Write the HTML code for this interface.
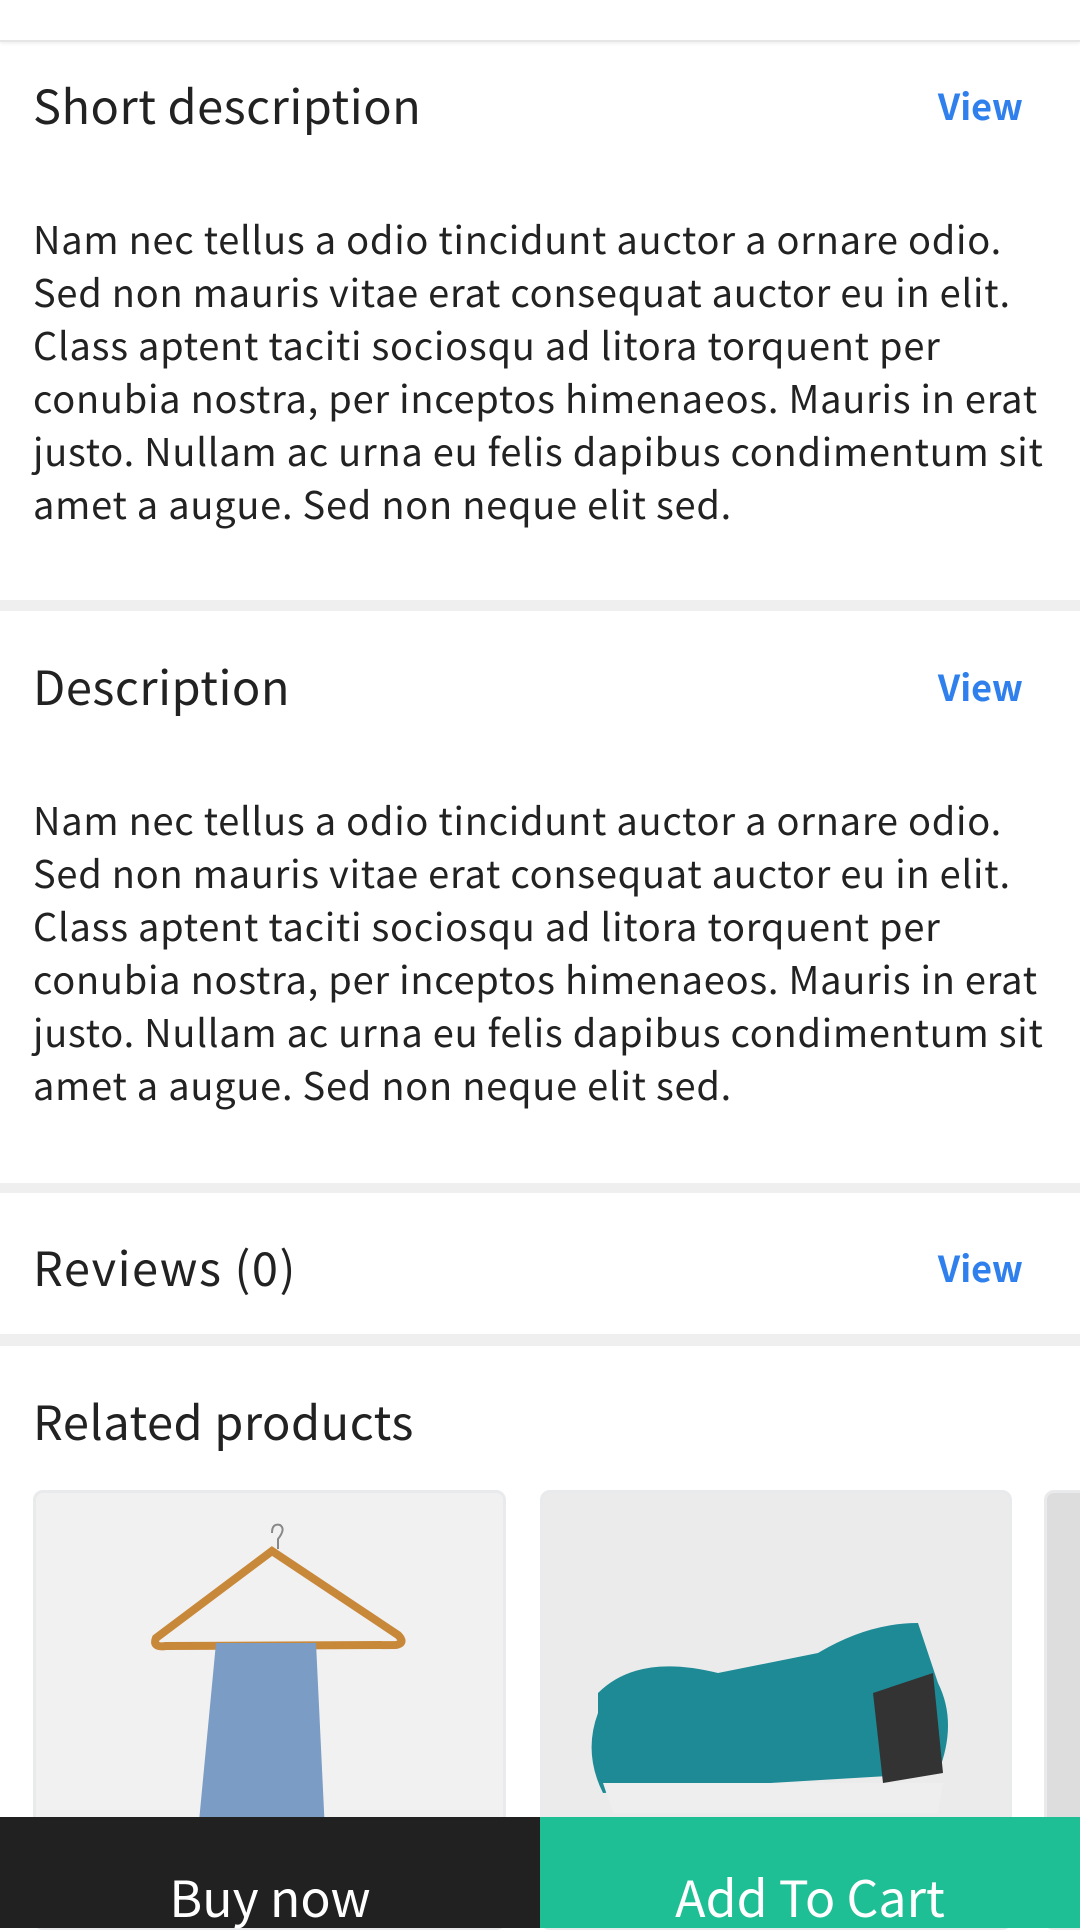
<!DOCTYPE html>
<html><head><meta charset="utf-8"><style>
*{margin:0;padding:0;box-sizing:border-box}
body{width:1080px;height:1928px;overflow:hidden;background:#fff;font-family:"Noto Sans CJK JP","Liberation Sans",sans-serif;color:#222;position:relative}
.a{position:absolute}
.h{font-size:47px;line-height:60px;color:#222;left:33px;letter-spacing:0.5px}
.v{font-size:36px;line-height:50px;color:#2f80ed;font-weight:bold;right:57px}
.t{left:33px;width:1047px;font-size:38px;line-height:53px;color:#222;white-space:nowrap;letter-spacing:0.75px}
.band{left:0;width:1080px;background:#efefef}
</style></head><body>
<div class="a" style="top:0;left:0;width:1080px;height:42px;border-bottom:2px solid #e6e6e6;box-shadow:0 2px 3px rgba(0,0,0,.06)"></div>
<div class="a h" style="top:74px">Short description</div>
<div class="a v" style="top:80px">View</div>
<div class="a t" style="top:211px">Nam nec tellus a odio tincidunt auctor a ornare odio.<br>Sed non mauris vitae erat consequat auctor eu in elit.<br>Class aptent taciti sociosqu ad litora torquent per<br>conubia nostra, per inceptos himenaeos. Mauris in erat<br>justo. Nullam ac urna eu felis dapibus condimentum sit<br>amet a augue. Sed non neque elit sed.</div>
<div class="a band" style="top:600px;height:11px"></div>
<div class="a h" style="top:655px">Description</div>
<div class="a v" style="top:661px">View</div>
<div class="a t" style="top:792px">Nam nec tellus a odio tincidunt auctor a ornare odio.<br>Sed non mauris vitae erat consequat auctor eu in elit.<br>Class aptent taciti sociosqu ad litora torquent per<br>conubia nostra, per inceptos himenaeos. Mauris in erat<br>justo. Nullam ac urna eu felis dapibus condimentum sit<br>amet a augue. Sed non neque elit sed.</div>
<div class="a band" style="top:1183px;height:10px"></div>
<div class="a h" style="top:1236px;letter-spacing:1.5px">Reviews (0)</div>
<div class="a v" style="top:1242px">View</div>
<div class="a band" style="top:1334px;height:12px"></div>
<div class="a h" style="top:1390px">Related products</div>
<div class="a" style="top:1490px;left:33px;width:473px;height:440px;border:3px solid #e8eaec;border-radius:10px;background:#f1f1f1;overflow:hidden">
<svg width="473" height="440"><path d="M236 40 q0 -10 8 -8 q6 4 -2 14 v10" stroke="#888" stroke-width="2" fill="none"/><path d="M236 58 L120 145 q-4 10 10 8 L360 152 q10 -2 2 -10 Z" fill="none" stroke="#c8883a" stroke-width="8"/><path d="M180 150 L280 150 L290 360 L160 360 Z" fill="#7b9cc4"/></svg></div>
<div class="a" style="top:1490px;left:540px;width:472px;height:440px;border:3px solid #e8eaec;border-radius:10px;background:#ebebeb;overflow:hidden">
<svg width="472" height="440"><path d="M55 200 q40 -40 120 -20 l100 -20 q50 -30 100 -30 l20 60 q20 40 0 90 L60 300 q-20 -40 -5 -80Z" fill="#1d8a96"/><path d="M60 290 L400 290 L395 320 L70 320Z" fill="#eee"/><path d="M330 200 l60 -20 l10 100 l-60 10Z" fill="#333"/></svg></div>
<div class="a" style="top:1490px;left:1044px;width:60px;height:440px;border:3px solid #e8eaec;border-radius:10px;background:#ddd"></div>
<div class="a" style="top:1817px;left:0;width:540px;height:111px;background:#212121;color:#fff;font-size:50px;line-height:70px;text-align:center;padding-top:44px">Buy now</div>
<div class="a" style="top:1817px;left:540px;width:540px;height:111px;background:#1fbf95;color:#fff;font-size:50px;line-height:70px;text-align:center;padding-top:44px">Add To Cart</div>
</body></html>
